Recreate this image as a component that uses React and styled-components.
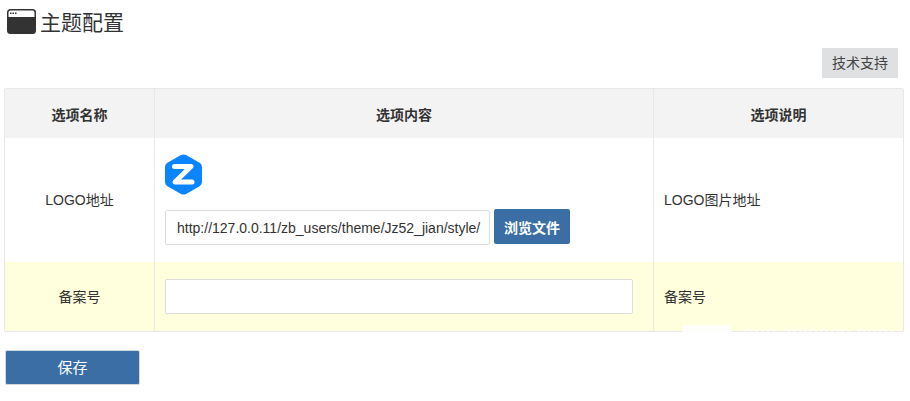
import React from "react";
import styled, { createGlobalStyle } from "styled-components";

const Global = createGlobalStyle`
  html, body {
    margin: 0;
    padding: 0;
    background: #fff;
  }
  body {
    font-family: "Liberation Sans", "Noto Sans CJK SC", sans-serif;
    font-size: 14px;
    color: #333;
  }
  * {
    box-sizing: border-box;
  }
`;

const Page = styled.div`
  width: 910px;
  height: 401px;
  padding: 0 6px 0 4px;
  overflow: hidden;
`;

const TitleRow = styled.div`
  height: 48px;
  padding: 9px 0 0 3px;
  display: flex;
  align-items: flex-start;
  gap: 4px;
`;

const Title = styled.h1`
  margin: 0;
  font-size: 21px;
  font-weight: 400;
  line-height: 28px;
  color: #333;
`;

const Toolbar = styled.div`
  height: 40px;
  padding-right: 6px;
  display: flex;
  justify-content: flex-end;
  align-items: flex-start;
`;

const SupportLink = styled.a`
  width: 76px;
  height: 30px;
  padding-bottom: 2px;
  background: #dee0e2;
  color: #444;
  font-size: 14px;
  display: flex;
  align-items: center;
  justify-content: center;
`;

const Table = styled.div`
  position: relative;
  width: 900px;
  border: 1px solid #e8e8e8;
  border-radius: 2px;
  display: grid;
  grid-template-columns: 149px 499px 1fr;
`;

const Cell = styled.div`
  background: ${(p) => p.$bg || "#fff"};
  height: ${(p) => p.$h}px;
  border-left: ${(p) => (p.$first ? "none" : "1px solid #e8e8e8")};
  padding: ${(p) => p.$pad || "0"};
  display: flex;
  flex-direction: column;
  justify-content: center;
  align-items: ${(p) => (p.$center ? "center" : "stretch")};
  font-size: 14px;
  font-weight: ${(p) => (p.$head ? 700 : 400)};
`;

const TextInput = styled.input`
  height: 35px;
  width: ${(p) => p.$w}px;
  border: 1px solid #dcdcdc;
  border-radius: 2px;
  background: #fff;
  padding: 0 6px 0 11px;
  font-family: "Liberation Sans", sans-serif;
  font-size: 14px;
  color: #333;
  outline: none;
`;

const UploadRow = styled.div`
  display: flex;
  align-items: center;
  gap: 4px;
  margin-top: 14px;
`;

const BrowseButton = styled.button`
  width: 76px;
  height: 35px;
  margin-bottom: 2px;
  border: none;
  border-radius: 2px;
  background: #3a6ea5;
  color: #fff;
  font-family: inherit;
  font-size: 14px;
  font-weight: 700;
  padding: 0;
`;

const SaveButton = styled.button`
  display: block;
  width: 135px;
  height: 35px;
  margin: 18px 0 0 1px;
  border: 1px solid #d4d8dd;
  border-radius: 2px;
  background: #3a6ea5;
  color: #fff;
  font-family: inherit;
  font-size: 15px;
  padding: 0 0 2px;
`;

// the site's watermark, white so it only shows over the yellow row
const Watermark = styled.div`
  position: absolute;
  left: 677px;
  bottom: -13px;
  display: flex;
  align-items: flex-start;
  gap: 11px;
  color: rgba(255, 255, 255, 0.8);
  font-size: 20px;
  line-height: 22px;
  white-space: nowrap;
`;

const WatermarkBox = styled.span`
  width: 50px;
  height: 14px;
  margin-top: 3px;
  background: rgba(255, 255, 255, 0.85);
`;

const WindowIcon = () => (
  <svg width="29" height="25" viewBox="0 0 29 25">
    <rect width="29" height="25" rx="3.500" fill="#333" />
    <path d="M1.500 8V3.500a2 2 0 0 1 2-2h22a2 2 0 0 1 2 2V8z" fill="#fff" />
    <rect x="3" y="3.500" width="1.500" height="1.500" fill="#333" />
    <rect x="5.500" y="3.500" width="1.500" height="1.500" fill="#333" />
    <rect x="8" y="3.500" width="1.500" height="1.500" fill="#333" />
  </svg>
);

const LogoMark = () => (
  <svg width="37" height="41" viewBox="0 0 37 41" style={{ display: "block" }}>
    <path
      d="M16 1 Q18.500 0 21 1 L35 9 Q37 10.500 37 13 L37 28 Q37 30.500 35 32 L21 40 Q18.500 41 16 40 L2 32 Q0 30.500 0 28 L0 13 Q0 10.500 2 9 Z"
      fill="#0a84ff"
    />
    <path
      d="M9.500 12.500 H26 L10 28 H27"
      fill="none"
      stroke="#fff"
      strokeWidth="5"
      strokeLinecap="round"
      strokeLinejoin="round"
    />
  </svg>
);

const App = () => (
  <Page>
    <Global />
    <TitleRow>
      <WindowIcon />
      <Title>主题配置</Title>
    </TitleRow>
    <Toolbar>
      <SupportLink>技术支持</SupportLink>
    </Toolbar>
    <Table>
      <Cell $first $head $center $bg="#f3f3f3" $h={49}>选项名称</Cell>
      <Cell $head $center $bg="#f3f3f3" $h={49}>选项内容</Cell>
      <Cell $head $center $bg="#f3f3f3" $h={49}>选项说明</Cell>

      <Cell $first $center $h={124} $pad="0 0 2px">LOGO地址</Cell>
      <Cell $h={124} $pad="0 10px">
        <LogoMark />
        <UploadRow>
          <TextInput $w={325} readOnly value="http://127.0.0.11/zb_users/theme/Jz52_jian/style/" />
          <BrowseButton>浏览文件</BrowseButton>
        </UploadRow>
      </Cell>
      <Cell $h={124} $pad="0 10px 2px">LOGO图片地址</Cell>

      <Cell $first $center $bg="#ffffdd" $h={69} $pad="0 0 2px">备案号</Cell>
      <Cell $bg="#ffffdd" $h={69} $pad="0 10px">
        <TextInput $w={468} readOnly value="" />
      </Cell>
      <Cell $bg="#ffffdd" $h={69} $pad="0 10px 2px">备案号</Cell>
      <Watermark>
        <WatermarkBox />
        <span>app.zblogcn.com</span>
      </Watermark>
    </Table>
    <SaveButton>保存</SaveButton>
  </Page>
);

export default App;
